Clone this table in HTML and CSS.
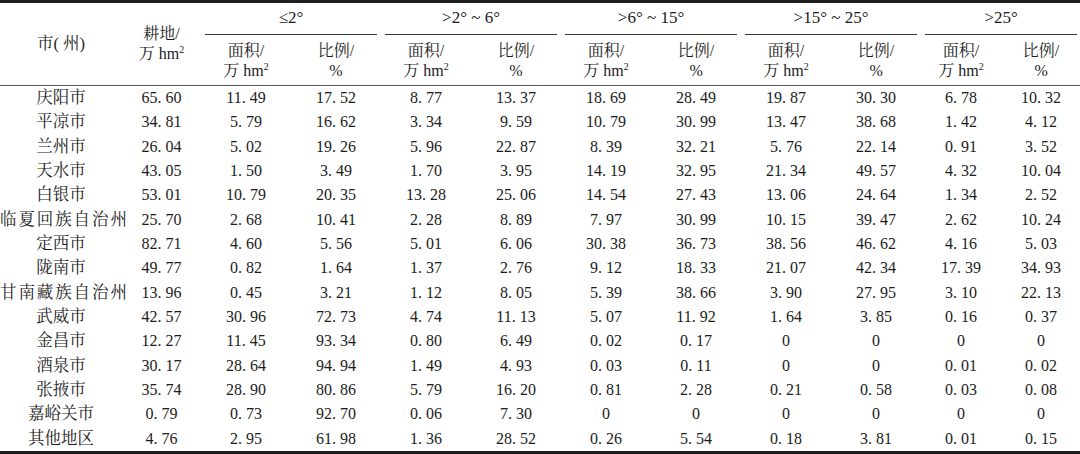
FILE: index.html
```html
<!DOCTYPE html>
<html lang="zh-CN">
<head>
<meta charset="utf-8">
<title>甘肃省各市(州)耕地坡度分布</title>
<link rel="stylesheet" href="styles.css">
</head>
<body>
<table class="tbl">
  <colgroup>
    <col class="c-city"><col class="c-total">
    <col class="c-sub"><col class="c-sub">
    <col class="c-sub"><col class="c-sub">
    <col class="c-sub"><col class="c-sub">
    <col class="c-sub"><col class="c-sub">
    <col class="c-last"><col class="c-last">
  </colgroup>
  <thead>
    <tr class="r-group">
      <th rowspan="2" class="h-city">市( 州)</th>
      <th rowspan="2" class="h-total">耕地/<br>万 hm<sup>2</sup></th>
      <th colspan="2" class="grp">≤2°</th>
      <th colspan="2" class="grp">&gt;2° ~ 6°</th>
      <th colspan="2" class="grp">&gt;6° ~ 15°</th>
      <th colspan="2" class="grp">&gt;15° ~ 25°</th>
      <th colspan="2" class="grp">&gt;25°</th>
    </tr>
    <tr class="r-sub">
      <th>面积/<br>万 hm<sup>2</sup></th><th>比例/<br>%</th>
      <th>面积/<br>万 hm<sup>2</sup></th><th>比例/<br>%</th>
      <th>面积/<br>万 hm<sup>2</sup></th><th>比例/<br>%</th>
      <th>面积/<br>万 hm<sup>2</sup></th><th>比例/<br>%</th>
      <th>面积/<br>万 hm<sup>2</sup></th><th>比例/<br>%</th>
    </tr>
  </thead>
  <tbody>
    <tr><td>庆阳市</td><td>65. 60</td><td>11. 49</td><td>17. 52</td><td>8. 77</td><td>13. 37</td><td>18. 69</td><td>28. 49</td><td>19. 87</td><td>30. 30</td><td>6. 78</td><td>10. 32</td></tr>
    <tr><td>平凉市</td><td>34. 81</td><td>5. 79</td><td>16. 62</td><td>3. 34</td><td>9. 59</td><td>10. 79</td><td>30. 99</td><td>13. 47</td><td>38. 68</td><td>1. 42</td><td>4. 12</td></tr>
    <tr><td>兰州市</td><td>26. 04</td><td>5. 02</td><td>19. 26</td><td>5. 96</td><td>22. 87</td><td>8. 39</td><td>32. 21</td><td>5. 76</td><td>22. 14</td><td>0. 91</td><td>3. 52</td></tr>
    <tr><td>天水市</td><td>43. 05</td><td>1. 50</td><td>3. 49</td><td>1. 70</td><td>3. 95</td><td>14. 19</td><td>32. 95</td><td>21. 34</td><td>49. 57</td><td>4. 32</td><td>10. 04</td></tr>
    <tr><td>白银市</td><td>53. 01</td><td>10. 79</td><td>20. 35</td><td>13. 28</td><td>25. 06</td><td>14. 54</td><td>27. 43</td><td>13. 06</td><td>24. 64</td><td>1. 34</td><td>2. 52</td></tr>
    <tr><td class="long">临夏回族自治州</td><td>25. 70</td><td>2. 68</td><td>10. 41</td><td>2. 28</td><td>8. 89</td><td>7. 97</td><td>30. 99</td><td>10. 15</td><td>39. 47</td><td>2. 62</td><td>10. 24</td></tr>
    <tr><td>定西市</td><td>82. 71</td><td>4. 60</td><td>5. 56</td><td>5. 01</td><td>6. 06</td><td>30. 38</td><td>36. 73</td><td>38. 56</td><td>46. 62</td><td>4. 16</td><td>5. 03</td></tr>
    <tr><td>陇南市</td><td>49. 77</td><td>0. 82</td><td>1. 64</td><td>1. 37</td><td>2. 76</td><td>9. 12</td><td>18. 33</td><td>21. 07</td><td>42. 34</td><td>17. 39</td><td>34. 93</td></tr>
    <tr><td class="long">甘南藏族自治州</td><td>13. 96</td><td>0. 45</td><td>3. 21</td><td>1. 12</td><td>8. 05</td><td>5. 39</td><td>38. 66</td><td>3. 90</td><td>27. 95</td><td>3. 10</td><td>22. 13</td></tr>
    <tr><td>武威市</td><td>42. 57</td><td>30. 96</td><td>72. 73</td><td>4. 74</td><td>11. 13</td><td>5. 07</td><td>11. 92</td><td>1. 64</td><td>3. 85</td><td>0. 16</td><td>0. 37</td></tr>
    <tr><td>金昌市</td><td>12. 27</td><td>11. 45</td><td>93. 34</td><td>0. 80</td><td>6. 49</td><td>0. 02</td><td>0. 17</td><td>0</td><td>0</td><td>0</td><td>0</td></tr>
    <tr><td>酒泉市</td><td>30. 17</td><td>28. 64</td><td>94. 94</td><td>1. 49</td><td>4. 93</td><td>0. 03</td><td>0. 11</td><td>0</td><td>0</td><td>0. 01</td><td>0. 02</td></tr>
    <tr><td>张掖市</td><td>35. 74</td><td>28. 90</td><td>80. 86</td><td>5. 79</td><td>16. 20</td><td>0. 81</td><td>2. 28</td><td>0. 21</td><td>0. 58</td><td>0. 03</td><td>0. 08</td></tr>
    <tr><td>嘉峪关市</td><td>0. 79</td><td>0. 73</td><td>92. 70</td><td>0. 06</td><td>7. 30</td><td>0</td><td>0</td><td>0</td><td>0</td><td>0</td><td>0</td></tr>
    <tr><td>其他地区</td><td>4. 76</td><td>2. 95</td><td>61. 98</td><td>1. 36</td><td>28. 52</td><td>0. 26</td><td>5. 54</td><td>0. 18</td><td>3. 81</td><td>0. 01</td><td>0. 15</td></tr>
  </tbody>
</table>
</body>
</html>
```

FILE: styles.css
```css
html, body {
  margin: 0;
  padding: 0;
  background: #ffffff;
  overflow: hidden;
}

.tbl {
  width: 1081px;
  table-layout: fixed;
  border-collapse: separate;
  border-spacing: 0;
  border-top: 3px solid #1e1e1e;
  border-bottom: 3px solid #1e1e1e;
  font-family: "Liberation Serif", "Noto Serif CJK SC", "Noto Sans CJK SC", serif;
  font-size: 16px;
  color: #1c1c1c;
}

.c-city { width: 122px; }
.c-total { width: 79px; }
.c-sub { width: 90px; }
.c-last { width: 80px; }

.tbl th,
.tbl td {
  padding: 0;
  text-align: center;
  vertical-align: middle;
  font-weight: normal;
  white-space: nowrap;
  line-height: 20px;
}

.tbl sup {
  font-size: 10px;
  line-height: 0;
  vertical-align: 6px;
}

.r-group { height: 32px; }
.r-group .grp {
  font-size: 17px;
  padding-bottom: 3px;
  background-image: linear-gradient(#3a3a3a, #3a3a3a);
  background-repeat: no-repeat;
  background-size: calc(100% - 8px) 1px;
  background-position: center bottom;
}

.r-sub { height: 51px; }
.r-sub th {
  padding-top: 2px;
  border-bottom: 1px solid #555555;
}

.h-city,
.h-total {
  border-bottom: 1px solid #555555;
}

.h-city { font-size: 16.5px; }
.h-total { padding-top: 2px; }

.tbl tbody tr { height: 24.33px; }

.tbl tbody td:first-child {
  font-size: 16.5px;
}

.tbl td.long {
  text-align: left;
  font-size: 17.5px;
  letter-spacing: 1.9px;
}
```
